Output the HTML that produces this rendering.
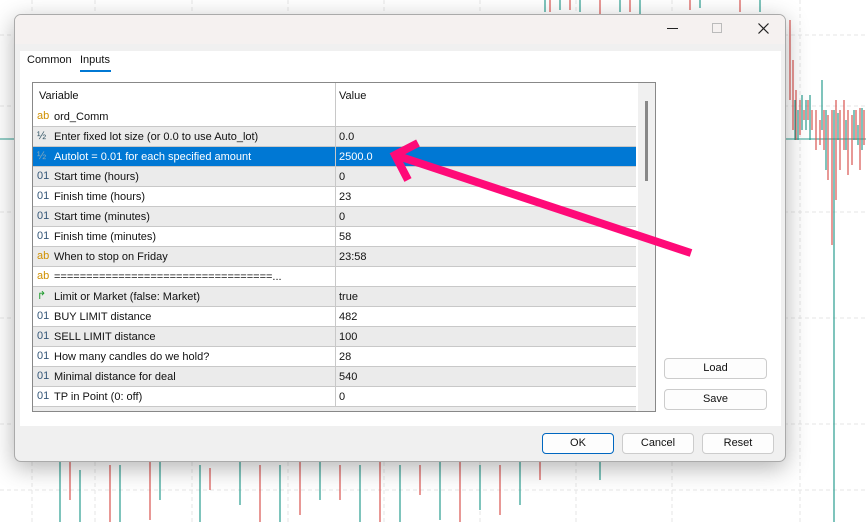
<!DOCTYPE html>
<html><head><meta charset="utf-8"><style>
*{margin:0;padding:0;box-sizing:border-box}
body{width:866px;height:522px;background:#fff;position:relative;overflow:hidden;font-family:"Liberation Sans",sans-serif;font-size:11px;color:#111}
.abs{position:absolute}
#dlg{left:14px;top:14px;width:772px;height:448px;background:#f0f0f0;border:1px solid #aaa;border-radius:7px;box-shadow:0 6px 24px rgba(0,0,0,.3);overflow:hidden}
#title{left:0;top:0;width:100%;height:29px;background:#f5f1f0}
#panel{left:5px;top:36px;width:761px;height:375px;background:#fff}
#tbl{left:17px;top:67px;width:624px;height:330px;border:1px solid #888;background:#fff;overflow:hidden}
.row{position:absolute;left:0;width:603px;height:20px;border-bottom:1px solid #c8c8c8;line-height:21px;white-space:nowrap}
.g{background:#ebebeb}.sel{background:#0078d4;color:#fff}
.ic{position:absolute;left:4px;width:16px;font-size:11px;line-height:19px}
.n{position:absolute;left:21px}
.v{position:absolute;left:302px;border-left:1px solid #c8c8c8;padding-left:3px;height:20px;width:301px}
.btn{position:absolute;height:21px;border:1px solid #ccc;border-radius:4px;background:#fdfdfd;text-align:center;line-height:19px;font-size:11px}
</style></head><body>
<svg class="abs" style="left:0;top:0" width="866" height="522">
<g stroke="#e6e6e6" stroke-dasharray="4,3">
<line x1="32" y1="0" x2="32" y2="522"/><line x1="95" y1="0" x2="95" y2="522"/><line x1="192" y1="0" x2="192" y2="522"/><line x1="288" y1="0" x2="288" y2="522"/><line x1="384" y1="0" x2="384" y2="522"/><line x1="480" y1="0" x2="480" y2="522"/><line x1="576" y1="0" x2="576" y2="522"/><line x1="672" y1="0" x2="672" y2="522"/><line x1="800" y1="0" x2="800" y2="522"/>
<line x1="0" y1="35" x2="866" y2="35"/><line x1="0" y1="106" x2="866" y2="106"/><line x1="0" y1="212" x2="866" y2="212"/><line x1="0" y1="318" x2="866" y2="318"/><line x1="0" y1="424" x2="866" y2="424"/><line x1="0" y1="490" x2="866" y2="490"/>
</g>
<line x1="0" y1="139" x2="866" y2="139" stroke="#2a9d8f" stroke-width="1"/>
<g stroke-width="1.2">
<path d="M790 20V100M793 60V130M796 90V140M800 100V135M804 110V120M808 100V120M812 110V130M816 110V150M820 120V145M824 110V150M828 115V180M832 110V245M836 100V200M840 110V170M844 100V150M848 110V175M852 115V165M856 110V140M860 108V170M864 110V145" stroke="#d9534f"/>
<path d="M795 100V140M798 110V140M802 95V130M806 100V130M810 95V140M822 80V130M826 110V170M834 110V522M838 113V140M846 120V150M854 110V140M858 125V145M862 108V150" stroke="#2a9d8f"/>
<path d="M60 460V522M80 470V522M120 465V522M160 462V500M200 465V522M240 462V505M280 465V522M320 462V500M360 465V522M400 465V522M440 462V520M480 465V510M520 462V505M600 460V480" stroke="#2a9d8f"/>
<path d="M70 462V500M110 465V522M150 462V520M210 468V490M260 465V522M300 462V515M340 465V500M380 462V522M420 465V495M460 462V522M500 465V515M540 462V480" stroke="#d9534f"/>
<path d="M545 0V12M560 0V10M580 0V12M620 0V12M640 0V14M700 0V8M760 0V12" stroke="#2a9d8f"/>
<path d="M550 0V12M570 0V10M600 0V14M630 0V12M690 0V10M740 0V12" stroke="#d9534f"/>
</g>
</svg>
<div id="dlg" class="abs">
<div id="title" class="abs"></div>
<svg class="abs" style="left:0;top:0" width="772" height="30">
<line x1="652" y1="13.5" x2="663" y2="13.5" stroke="#222"/>
<rect x="697.5" y="8.5" width="9" height="9" fill="none" stroke="#bbb"/>
<path d="M743.5 8.5L753.5 18.5M753.5 8.5L743.5 18.5" stroke="#222" stroke-width="1.2"/>
</svg>
<div id="panel" class="abs"></div>
<div class="abs" style="left:12px;top:39px">Common</div>
<div class="abs" style="left:65px;top:39px">Inputs</div>
<div class="abs" style="left:65px;top:55px;width:31px;height:2px;background:#0078d4"></div>
<div id="tbl" class="abs">
<div class="row" style="top:0;height:25px;border:none;line-height:27px"><span class="n" style="left:6px">Variable</span><span class="v" style="height:25px;width:302px">Value</span></div>
<div class="row" style="top:24px"><span class="ic" style="color:#d09000">ab</span><span class="n">ord_Comm</span><span class="v"></span></div>
<div class="row g" style="top:44px"><span class="ic" style="color:#356">½</span><span class="n">Enter fixed lot size (or 0.0 to use Auto_lot)</span><span class="v">0.0</span></div>
<div class="row sel" style="top:64px"><span class="ic" style="color:#8ab">½</span><span class="n">Autolot = 0.01 for each specified amount</span><span class="v">2500.0</span></div>
<div class="row g" style="top:84px"><span class="ic" style="color:#357">01</span><span class="n">Start time (hours)</span><span class="v">0</span></div>
<div class="row" style="top:104px"><span class="ic" style="color:#357">01</span><span class="n">Finish time (hours)</span><span class="v">23</span></div>
<div class="row g" style="top:124px"><span class="ic" style="color:#357">01</span><span class="n">Start time (minutes)</span><span class="v">0</span></div>
<div class="row" style="top:144px"><span class="ic" style="color:#357">01</span><span class="n">Finish time (minutes)</span><span class="v">58</span></div>
<div class="row g" style="top:164px"><span class="ic" style="color:#d09000">ab</span><span class="n">When to stop on Friday</span><span class="v">23:58</span></div>
<div class="row" style="top:184px"><span class="ic" style="color:#d09000">ab</span><span class="n">==================================...</span><span class="v"></span></div>
<div class="row g" style="top:204px"><span class="ic" style="color:#1a9a2a">↱</span><span class="n">Limit or Market (false: Market)</span><span class="v">true</span></div>
<div class="row" style="top:224px"><span class="ic" style="color:#357">01</span><span class="n">BUY LIMIT distance</span><span class="v">482</span></div>
<div class="row g" style="top:244px"><span class="ic" style="color:#357">01</span><span class="n">SELL LIMIT distance</span><span class="v">100</span></div>
<div class="row" style="top:264px"><span class="ic" style="color:#357">01</span><span class="n">How many candles do we hold?</span><span class="v">28</span></div>
<div class="row g" style="top:284px"><span class="ic" style="color:#357">01</span><span class="n">Minimal distance for deal</span><span class="v">540</span></div>
<div class="row" style="top:304px"><span class="ic" style="color:#357">01</span><span class="n">TP in Point (0: off)</span><span class="v">0</span></div>
<div class="row g" style="top:324px"></div>
<div class="abs" style="left:605px;top:0;width:18px;height:330px;background:#f0f0f0"></div>
<div class="abs" style="left:612px;top:18px;width:3px;height:80px;background:#888"></div>
</div>
<div class="btn" style="left:649px;top:343px;width:103px">Load</div>
<div class="btn" style="left:649px;top:374px;width:103px">Save</div>
<div class="btn" style="left:527px;top:418px;width:72px;border:1px solid #0067c0">OK</div>
<div class="btn" style="left:607px;top:418px;width:72px">Cancel</div>
<div class="btn" style="left:687px;top:418px;width:72px">Reset</div>
</div>
<svg class="abs" style="left:0;top:0" width="866" height="522">
<g stroke="#ff0a78" stroke-width="8" fill="none" stroke-linecap="butt">
<line x1="691" y1="253" x2="395" y2="155"/>
<polyline points="418,143 395,155 408,180"/>
</g>
</svg>
</body></html>
